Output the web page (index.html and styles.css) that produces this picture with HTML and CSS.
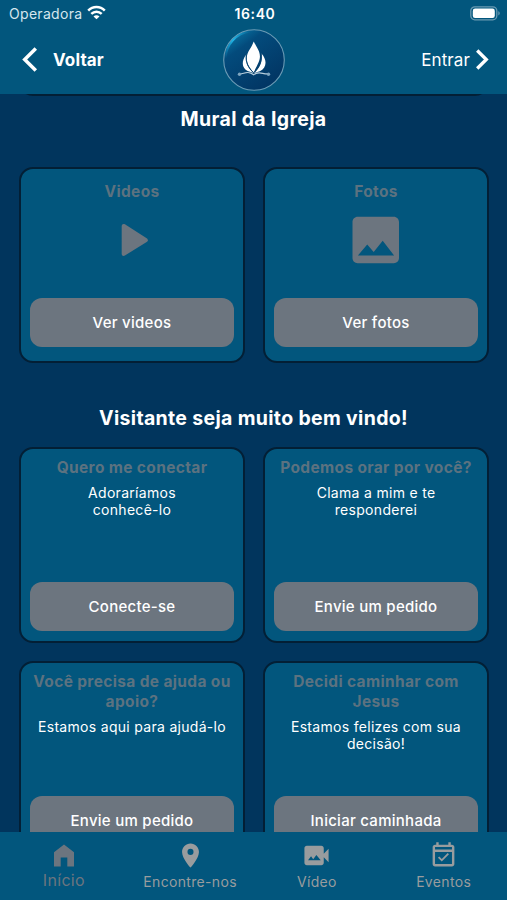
FILE: index.html
```html
<!DOCTYPE html>
<html lang="pt-BR">
<head>
<meta charset="utf-8">
<meta name="viewport" content="width=device-width, initial-scale=1">
<title>Mural da Igreja</title>
<link rel="stylesheet" href="styles.css">
</head>
<body>
<div class="app">
  <header class="top">
    <div class="status">
      <div class="carrier"><span>Operadora</span>
        <svg width="19" height="15" viewBox="0 0 19 15" fill="none" stroke="#fff" stroke-width="2.5"><path d="M1.2 5.6C5.8 .9 13.2 .9 17.8 5.6M4.3 8.8c3-2.9 7.400-2.900 10.400 0"/><path d="M9.500 14.300 6.500 11.400c1.700-1.500 4.300-1.500 6 0z" fill="#fff" stroke="none"/></svg>
      </div>
      <div class="clock">16:40</div>
      <div class="battery"><svg width="31" height="15" viewBox="0 0 31 15"><rect x=".8" y=".8" width="26" height="13" rx="4" fill="none" stroke="#6a9ab2" stroke-width="1.300"/><rect x="2.800" y="2.600" width="22" height="9.400" rx="2.300" fill="#fff"/><path d="M28.300 5.200c1.900.6 1.900 3.600 0 4.200z" fill="#6a9ab2"/></svg></div>
    </div>
    <div class="bar">
      <div class="back"><svg width="16" height="25" viewBox="0 0 16 25" fill="none" stroke="#fff" stroke-width="3.500"><path d="M13.800 1.500 2.700 12.500l11.100 11"/></svg><span>Voltar</span></div>
      <svg class="logo" width="64" height="64" viewBox="0 0 64 64">
        <defs>
          <linearGradient id="disc" x1="0.100" y1="0.050" x2="0.700" y2="0.900"><stop offset="0" stop-color="#0979a8"/><stop offset=".3" stop-color="#034b7c"/><stop offset="1" stop-color="#023765"/></linearGradient>
          <linearGradient id="glow" x1="0" y1="1" x2="1" y2="0"><stop offset="0" stop-color="#18a8dc" stop-opacity="0"/><stop offset=".5" stop-color="#22b4e5"/><stop offset="1" stop-color="#18a8dc" stop-opacity="0"/></linearGradient>
        </defs>
        <circle cx="32" cy="32" r="30.300" fill="url(#disc)" stroke="#6b9bb5" stroke-width="1.100"/>
        <path d="M3.500 30C4.500 16 14 5.500 28 3.500" fill="none" stroke="url(#glow)" stroke-width="2"/>
        <path d="M31.700 13.500c3.200 6.500 6.600 10 6.200 15.800-.3 5-3.800 9.500-6.200 15.500-4-4.700-7.100-9.300-6.900-15.300.2-5.800 4.700-9.500 6.900-16z" fill="#fff"/>
        <path d="M24.200 26.500c-5 6.500-4.500 13.500 1.500 16.600l6 2c-5.800-5.100-8.500-10.600-7.500-18.600z" fill="#fff"/>
        <path d="M39.500 25.500c6 6.700 5.200 14.500-1.700 17.700l-6 1.900c5.800-4.700 9-11 7.700-19.600z" fill="#fff"/>
        <path d="M24.200 27c-.8 7.500 2 13 7.500 17.600M39.200 26c.8 7.500-2.200 13.500-7.200 18.600" fill="none" stroke="#07436f" stroke-width=".9"/>
        <path d="M17 46c4.800.6 8-4.400 14.700.8 5-4.500 9.500 0 15-1" fill="none" stroke="#b8cedc" stroke-width="1.200"/>
        <circle cx="17.500" cy="46.300" r="1.700" fill="#7fa6c0"/><circle cx="46.500" cy="46.300" r="1.700" fill="#7fa6c0"/>
      </svg>
      <div class="enter"><span>Entrar</span><svg width="14" height="21" viewBox="0 0 14 21" fill="none" stroke="#fff" stroke-width="3.300"><path d="m2.200 1.500 9.100 9-9.100 9"/></svg></div>
    </div>
  </header>

  <main class="content">
    <div class="card previous"></div>
    <h2 class="heading mural">Mural da Igreja</h2>
    <section class="grid">
      <article class="card media">
        <h3>Videos</h3>
        <svg class="picture" width="62" height="62" viewBox="0 0 62 62"><path d="M20.700 17c0-1.900 1.700-2.600 3.200-1.700l21.800 14c1.500 1 1.500 2.700 0 3.700l-21.800 13.600c-1.500.9-3.200.2-3.200-1.600z" fill="#6c757f"/></svg>
        <button>Ver videos</button>
      </article>
      <article class="card media">
        <h3>Fotos</h3>
        <svg class="picture" width="62" height="62" viewBox="0 0 24 24"><path d="M20.900 19V5c0-1.100-.9-2-2-2H4.900c-1.100 0-2 .9-2 2v14c0 1.100.9 2 2 2h14c1.100 0 2-.9 2-2zM8.600 13.700l2.500 2.900 3.500-4.300 4.400 5.700h-14z" fill="#6c757f"/></svg>
        <button>Ver fotos</button>
      </article>
    </section>
    <h2 class="heading welcome">Visitante seja muito bem vindo!</h2>
    <section class="grid">
      <article class="card"><h3>Quero me conectar</h3><p>Adoraríamos<br>conhecê-lo</p><button>Conecte-se</button></article>
      <article class="card"><h3>Podemos orar por você?</h3><p>Clama a mim e te<br>responderei</p><button>Envie um pedido</button></article>
      <article class="card"><h3>Você precisa de ajuda ou<br>apoio?</h3><p>Estamos aqui para ajudá-lo</p><button>Envie um pedido</button></article>
      <article class="card"><h3>Decidi caminhar com<br>Jesus</h3><p>Estamos felizes com sua<br>decisão!</p><button>Iniciar caminhada</button></article>
    </section>
  </main>

  <nav class="tabs">
    <a class="tab active"><svg width="28" height="28" viewBox="0 0 28 28"><path d="M4 25.500V11.200L14 3.500l10 7.700v14.300h-6.700v-9h-6.600v9z" fill="#6c757f"/></svg><span>Início</span></a>
    <a class="tab"><svg width="29" height="29" viewBox="0 0 24 24"><path d="M12 2C8.130 2 5 5.130 5 9c0 5.250 7 13 7 13s7-7.750 7-13c0-3.870-3.130-7-7-7zm0 9.500a2.500 2.500 0 1 1 0-5 2.500 2.500 0 0 1 0 5z" fill="#999c9e"/></svg><span>Encontre-nos</span></a>
    <a class="tab"><svg width="29" height="29" viewBox="0 0 24 24"><path d="M18 10.480V6c0-1.100-.9-2-2-2H4c-1.100 0-2 .9-2 2v12c0 1.100.9 2 2 2h12c1.100 0 2-.9 2-2v-4.480l4 3.980v-11zM5 16l2.500-3.330 1.780 2.370L11.880 11.500 15.500 16z" fill="#999c9e"/></svg><span>Vídeo</span></a>
    <a class="tab"><svg width="29" height="29" viewBox="0 0 24 24"><path d="M16.530 11.060 15.470 10l-4.880 4.880-2.120-2.120-1.060 1.060L10.590 17zM19 3h-1V1h-2v2H8V1H6v2H5c-1.110 0-1.990.9-1.990 2L3 19c0 1.100.89 2 2 2h14c1.100 0 2-.9 2-2V5c0-1.100-.9-2-2-2zm0 16H5V9h14zM5 7V5h14v2z" fill="#999c9e"/></svg><span>Eventos</span></a>
  </nav>
</div>
</body>
</html>
```
FILE: styles.css
```css
* { box-sizing: border-box; }
body { margin: 0; background: #01355d; font-family: Inter, "Liberation Sans", sans-serif; color: #fff; }
.app { height: 900px; display: flex; flex-direction: column; overflow: hidden; }

.top { flex: 0 0 94px; background: #02567d; }
.status { height: 27px; padding: 0 6px 0 9px; display: grid; grid-template-columns: 1fr auto 1fr; align-items: center; font-size: 14px; line-height: 27px; }
.carrier { display: flex; align-items: center; gap: 5px; color: #d5e6ee; letter-spacing: .3px; }
.carrier svg { margin-top: -2px; }
.clock { font-weight: 600; font-size: 14px; letter-spacing: .6px; }
.battery { display: flex; justify-content: flex-end; }
.bar { height: 65px; padding: 0 18px 0 22px; display: grid; grid-template-columns: 200px 64px 1fr; align-items: center; }
.back { display: flex; align-items: center; gap: 15px; font-size: 17px; font-weight: 700; letter-spacing: .15px; }
.enter { display: flex; align-items: center; justify-content: flex-end; gap: 5px; font-size: 17px; letter-spacing: .1px; }
.logo { display: block; }

.content { flex: 1; min-height: 0; overflow: hidden; }
.heading { margin: 0; text-align: center; font-weight: 700; font-size: 19.500px; line-height: 24px; letter-spacing: .33px; }
.mural { margin-top: 11px; }
.welcome { margin: 43px 0 17px; }
.mural + .grid { margin-top: 36px; }
.grid { display: grid; grid-template-columns: 226px 226px; gap: 18px; padding: 0 18px 0 19px; }

.card { height: 196px; padding: 9px 9px 10px; border: 2px solid #031f35; border-radius: 14px; background: #02567d; display: flex; flex-direction: column; align-items: center; text-align: center; }
.card.previous { height: 40px; margin: -38px 18px 0 19px; padding: 0; }
.card h3 { margin: 0; font-size: 15.500px; line-height: 20px; font-weight: 700; color: #5c7280; letter-spacing: .35px; white-space: nowrap; }
.card p { margin: 6px 0 0; font-size: 14px; line-height: 17px; letter-spacing: .3px; white-space: nowrap; }
.card button { width: 204px; height: 49px; margin: auto 0 0; padding: 0; border: 0; border-radius: 12px; background: #6c757f; color: #fff; font: 500 15px/48px Inter, "Liberation Sans", sans-serif; letter-spacing: .27px; }
.media { padding-top: 13px; padding-bottom: 14px; }
.picture { margin-top: 7px; }

.tabs { flex: 0 0 68px; background: #02567d; display: grid; grid-template-columns: repeat(4, 1fr); }
.tab { display: flex; flex-direction: column; align-items: center; padding-top: 9px; color: #999c9e; font-size: 14px; letter-spacing: .33px; }
.tab span { line-height: 20px; margin-top: 2px; }
.tab.active { padding-left: 1px; color: #6c757f; font-size: 16px; }
.tab.active span { margin-top: 1px; }
```
